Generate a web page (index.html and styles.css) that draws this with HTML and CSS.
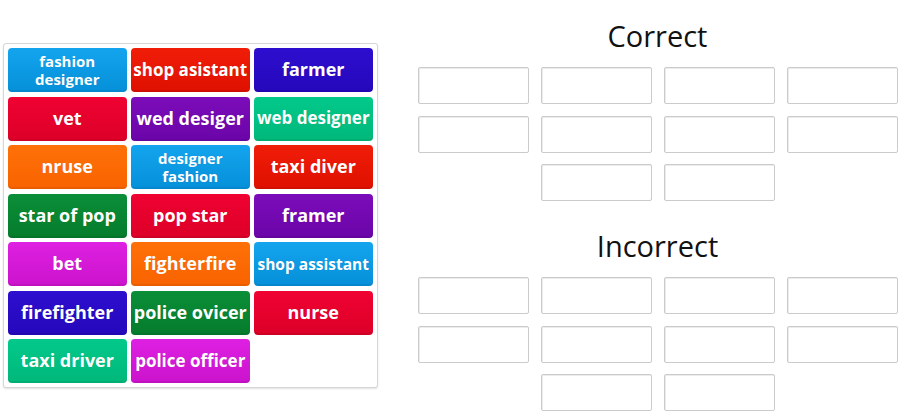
FILE: index.html
```html
<!DOCTYPE html>
<html lang="en">
<head>
  <meta charset="UTF-8">
  <meta name="viewport" content="width=device-width, initial-scale=1.0">
  <link rel="stylesheet" href="styles.css">
  <title>Group sort</title>
</head>
<body>
  <div class="game">
    <div class="tile-panel">
      <div class="tile blue two-line">fashion designer</div>
      <div class="tile red fit-md">shop asistant</div>
      <div class="tile navy">farmer</div>

      <div class="tile crimson">vet</div>
      <div class="tile purple">wed desiger</div>
      <div class="tile green fit-md">web designer</div>

      <div class="tile orange">nruse</div>
      <div class="tile blue two-line">designer fashion</div>
      <div class="tile red">taxi diver</div>

      <div class="tile forest">star of pop</div>
      <div class="tile crimson">pop star</div>
      <div class="tile purple">framer</div>

      <div class="tile magenta">bet</div>
      <div class="tile orange">fighterfire</div>
      <div class="tile blue fit-sm">shop assistant</div>

      <div class="tile navy">firefighter</div>
      <div class="tile forest">police ovicer</div>
      <div class="tile crimson">nurse</div>

      <div class="tile green">taxi driver</div>
      <div class="tile magenta fit-md">police officer</div>
    </div>

    <div class="groups">
      <div class="group">
        <h2 class="group-title">Correct</h2>
        <div class="slots">
          <div class="slot"></div><div class="slot"></div><div class="slot"></div><div class="slot"></div>
          <div class="slot"></div><div class="slot"></div><div class="slot"></div><div class="slot"></div>
          <div class="slot"></div><div class="slot"></div>
        </div>
      </div>
      <div class="group">
        <h2 class="group-title">Incorrect</h2>
        <div class="slots">
          <div class="slot"></div><div class="slot"></div><div class="slot"></div><div class="slot"></div>
          <div class="slot"></div><div class="slot"></div><div class="slot"></div><div class="slot"></div>
          <div class="slot"></div><div class="slot"></div>
        </div>
      </div>
    </div>
  </div>
</body>
</html>
```

FILE: styles.css
```css
body {
  margin: 0;
  font-family: 'Open Sans', sans-serif;
  background-color: #fff;
}

.game {
  display: flex;
  align-items: flex-start;
}

.tile-panel {
  margin: 43px 0 0 3px;
  padding: 4px;
  display: grid;
  grid-template-columns: repeat(3, 118.5px);
  grid-auto-rows: 44px;
  gap: 4.5px;
  background-color: #fff;
  border: 1px solid #d6d6d6;
  border-radius: 3px;
  box-shadow: 0 1px 2px rgba(0, 0, 0, 0.12);
}

.tile {
  display: flex;
  align-items: center;
  justify-content: center;
  text-align: center;
  color: #fff;
  font-weight: 700;
  font-size: 18px;
  line-height: 1.2;
  white-space: nowrap;
  border-radius: 4px;
  box-shadow: inset 0 -2px 0 rgba(0, 0, 0, 0.06);
  text-shadow: 0 0 1px rgba(0, 0, 0, 0.1);
}

.tile.fit-md {
  font-size: 17px;
}

.tile.fit-sm {
  font-size: 15.5px;
}

.tile.two-line {
  font-size: 15px;
  white-space: normal;
  padding: 0 20px;
}

.blue { background: linear-gradient(#14a4ee, #0590d9); }
.red { background: linear-gradient(#f01d08, #df1000); }
.navy { background: linear-gradient(#2e0ecf, #2508bb); }
.crimson { background: linear-gradient(#f00232, #dc0028); }
.purple { background: linear-gradient(#7c0cba, #6a05a8); }
.green { background: linear-gradient(#02c98a, #00b87a); }
.orange { background: linear-gradient(#ff7108, #f86300); }
.forest { background: linear-gradient(#0b8e38, #057c2c); }
.magenta { background: linear-gradient(#de20e2, #cb13cc); }

.groups {
  margin-left: 40px;
  padding-top: 16px;
  width: 480px;
}

.group + .group {
  margin-top: 25px;
}

.group-title {
  margin: 0 0 11px;
  font-size: 29px;
  line-height: 40px;
  font-weight: 400;
  color: #111;
  text-align: center;
}

.slots {
  display: flex;
  flex-wrap: wrap;
  justify-content: center;
  column-gap: 12px;
  row-gap: 11.5px;
}

.slot {
  box-sizing: border-box;
  width: 111px;
  height: 37px;
  background-color: #fff;
  border: 1px solid #cbcbcb;
  border-radius: 2px;
  box-shadow: inset 1px 1px 0 #ececec;
}
```
